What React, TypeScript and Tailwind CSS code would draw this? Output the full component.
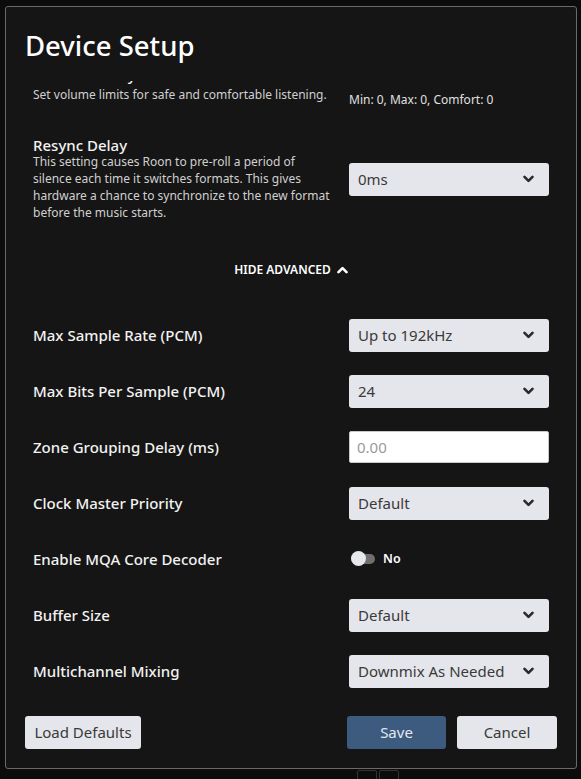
import React from "react";

const font = { fontFamily: '"Noto Sans", "Open Sans", sans-serif' };

function Chevron({ up = false, className = "" }: { up?: boolean; className?: string }) {
  return (
    <svg
      width="11"
      height="8"
      viewBox="0 0 11 8"
      className={className}
      style={{ transform: up ? "rotate(180deg)" : undefined }}
    >
      <path d="M1.5 1.8 L5.5 5.8 L9.5 1.8" fill="none" stroke="currentColor" strokeWidth="2.6" strokeLinecap="round" strokeLinejoin="round" />
    </svg>
  );
}

function Select({ value }: { value: string }) {
  return (
    <div className="flex h-[33px] w-[200px] items-center justify-between rounded-[3px] bg-[#e4e6eb] pl-[9px] pr-[15px] text-[15px] text-[#3a3a3a]">
      <span>{value}</span>
      <Chevron className="text-[#2a2a2a]" />
    </div>
  );
}

function Row({ label, children }: { label: string; children: React.ReactNode }) {
  return (
    <div className="flex h-[56px] items-center justify-between">
      <div className="text-[15px] font-medium text-[#f2f2f2]">{label}</div>
      {children}
    </div>
  );
}

export default function App() {
  return (
    <div className="min-h-[779px] w-[581px] overflow-hidden bg-[#0c0c0c] pt-[6px]" style={font}>
      <div className="ml-[5px] flex h-[763px] w-[572px] flex-col rounded-[3px] border border-[#6a6a6a] bg-[#151515]">
        {/* Title */}
        <div className="h-[74px] shrink-0 pl-[19px] pt-[22px]">
          <div className="text-[27.5px] font-medium leading-[34px] text-white">Device Setup</div>
        </div>

        {/* Scroll area */}
        <div className="h-[619px] shrink-0 overflow-hidden px-[27px]">
          <div className="-mt-[16px]">
            {/* Volume limits (partially scrolled) */}
            <div className="flex items-start justify-between">
              <div className="w-[300px]">
                <div className="text-[15px] font-medium leading-[21px] text-[#f2f2f2]">Volume Safety Limits</div>
                <div className="text-[12px] leading-[17px] text-[#d0d0d0]">
                  Set volume limits for safe and comfortable listening.
                </div>
              </div>
              <div className="w-[200px] pt-[26px] text-[12px] leading-[17px] text-[#e0e0e0]">
                Min: 0, Max: 0, Comfort: 0
              </div>
            </div>

            {/* Resync delay */}
            <div className="mt-[29px] flex items-center justify-between">
              <div className="w-[300px]">
                <div className="text-[15px] font-medium leading-[16px] text-[#f2f2f2]">Resync Delay</div>
                <div className="text-[12px] leading-[17px] text-[#d0d0d0]">
                  <div className="whitespace-nowrap">This setting causes Roon to pre-roll a period of</div>
                  <div className="whitespace-nowrap">silence each time it switches formats. This gives</div>
                  <div className="whitespace-nowrap">hardware a chance to synchronize to the new format</div>
                  <div className="whitespace-nowrap">before the music starts.</div>
                </div>
              </div>
              <Select value="0ms" />
            </div>

            {/* Hide advanced */}
            <div className="mt-[41px] flex h-[16px] items-center justify-center gap-[6px] text-[12px] font-semibold uppercase leading-[16px] text-white">
              <span>Hide Advanced</span>
              <Chevron up className="text-white" />
            </div>

            <div className="mt-[29px]">
              <Row label="Max Sample Rate (PCM)">
                <Select value="Up to 192kHz" />
              </Row>
              <Row label="Max Bits Per Sample (PCM)">
                <Select value="24" />
              </Row>
              <Row label="Zone Grouping Delay (ms)">
                <div className="flex h-[32px] w-[200px] items-center rounded-[2px] border border-[#c8c8c8] bg-white px-[7px] text-[15px] text-[#9a9a9a]">
                  0.00
                </div>
              </Row>
              <Row label="Clock Master Priority">
                <Select value="Default" />
              </Row>
              <Row label="Enable MQA Core Decoder">
                <div className="flex w-[200px] items-center pl-[2px]">
                  <div className="relative h-[10px] w-[24px] rounded-full bg-[#6f6f6f]">
                    <div className="absolute left-0 top-[-3px] h-[15px] w-[15px] rounded-full bg-[#e6e8ed]" />
                  </div>
                  <span className="ml-[8px] text-[12.5px] font-semibold text-white">No</span>
                </div>
              </Row>
              <Row label="Buffer Size">
                <Select value="Default" />
              </Row>
              <Row label="Multichannel Mixing">
                <Select value="Downmix As Needed" />
              </Row>
            </div>
          </div>
        </div>

        {/* Footer */}
        <div className="flex items-center justify-between px-[19px] pt-[16px]">
          <button className="h-[33px] w-[116px] rounded-[3px] bg-[#e4e6eb] text-[15px] text-[#3a3a3a]">
            Load Defaults
          </button>
          <div className="flex gap-[11px]">
            <button className="h-[33px] w-[99px] rounded-[3px] bg-[#3d5a7f] text-[15px] text-[#e3e8ef]">Save</button>
            <button className="h-[33px] w-[100px] rounded-[3px] bg-[#e4e6eb] text-[15px] text-[#3a3a3a]">Cancel</button>
          </div>
        </div>
      </div>
      <div className="flex gap-[2px] pl-[357px] pt-[1px]">
        <div className="h-[10px] w-[20px] rounded-[2px] border border-[#333]" />
        <div className="h-[10px] w-[20px] rounded-[2px] border border-[#333]" />
      </div>
    </div>
  );
}
